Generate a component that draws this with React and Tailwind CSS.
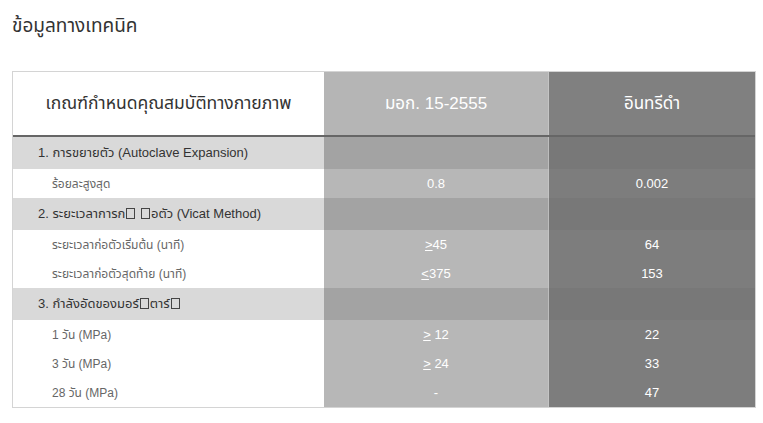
import React from 'react';

const font = { fontFamily: '"Liberation Sans", "Noto Sans Thai", "Noto Sans", "DejaVu Sans", sans-serif' };

// missing glyph box, as in the source page
const Tofu = () => (
  <span className="inline-block w-[9px] h-[11px] mx-[1px] border border-[#444] align-[-1px]"></span>
);

const rows = [
  { type: 'section', label: <>1. การขยายตัว (Autoclave Expansion)</> },
  { type: 'data', label: 'ร้อยละสูงสุด', std: '0.8', val: '0.002' },
  { type: 'section', label: <>2. ระยะเวลาการก<Tofu /> <Tofu />อตัว (Vicat Method)</> },
  { type: 'data', label: 'ระยะเวลาก่อตัวเริ่มต้น (นาที)', std: <><u>&gt;</u>45</>, val: '64' },
  { type: 'data', label: 'ระยะเวลาก่อตัวสุดท้าย (นาที)', std: <><u>&lt;</u>375</>, val: '153' },
  { type: 'section', label: <>3. กำลังอัดของมอร์<Tofu />ตาร์<Tofu /></> },
  { type: 'data', label: '1 วัน (MPa)', std: <><u>&gt;</u>{' '}12</>, val: '22' },
  { type: 'data', label: '3 วัน (MPa)', std: <><u>&gt;</u>{' '}24</>, val: '33' },
  { type: 'data', label: '28 วัน (MPa)', std: '-', val: '47' },
];

const App = () => {
  return (
    <div className="w-[763px] h-[423px] bg-white" style={font}>
      <h1 className="pl-3 pt-[13px] text-[19px] leading-[26px] text-[#333]">ข้อมูลทางเทคนิค</h1>

      <div className="ml-3 mt-[32px] w-[744px] border border-[#d4d4d4]">
        {/* header */}
        <div className="grid grid-cols-[311px_224px_207px] h-[65px] border-b-2 border-[#666]">
          <div className="flex items-center justify-center text-[17.5px] text-[#333] bg-white">
            เกณฑ์กำหนดคุณสมบัติทางกายภาพ
          </div>
          <div className="flex items-center justify-center text-[17px] text-white bg-[#b5b5b5]">
            มอก. 15-2555
          </div>
          <div className="flex items-center justify-center text-[17px] text-white bg-[#808080] border-l border-[#c4c4c4]">
            อินทรีดำ
          </div>
        </div>

        {rows.map((r, i) =>
          r.type === 'section' ? (
            <div key={i} className="grid grid-cols-[311px_224px_207px] h-[32px]">
              <div className="flex items-center pl-[25px] text-[13px] text-[#333] bg-[#d9d9d9]">
                <span>{r.label}</span>
              </div>
              <div className="bg-[#a3a3a3]"></div>
              <div className="bg-[#787878] border-l border-[#bdbdbd]"></div>
            </div>
          ) : (
            <div key={i} className="grid grid-cols-[311px_224px_207px] h-[29px]">
              <div className="flex items-center pl-[39px] text-[12px] text-[#666] bg-white">{r.label}</div>
              <div className="flex items-center justify-center text-[13px] text-white bg-[#b7b7b7]">
                <span>{r.std}</span>
              </div>
              <div className="flex items-center justify-center text-[13px] text-white bg-[#7d7d7d] border-l border-[#c4c4c4]">
                {r.val}
              </div>
            </div>
          )
        )}
      </div>
    </div>
  );
};

export default App;
